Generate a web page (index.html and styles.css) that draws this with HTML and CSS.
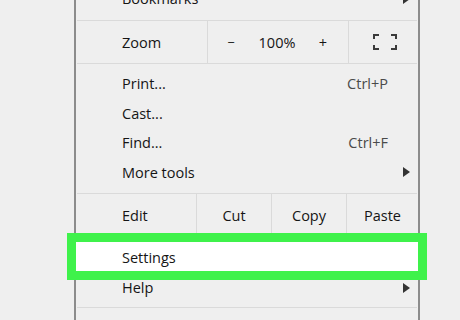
FILE: index.html
```html
<!DOCTYPE html>
<html lang="en">
<head>
  <meta charset="UTF-8">
  <meta name="viewport" content="width=device-width, initial-scale=1.0">
  <title>Browser Menu</title>
  <link rel="stylesheet" href="styles.css">
</head>
<body>
  <div class="menu">
    <div class="group first">
      <div class="item"><span>Bookmarks</span><span class="key"></span><span class="sub"></span></div>
    </div>
    <div class="sep"></div>

    <div class="row">
      <div class="row-label zoom-label">Zoom</div>
      <div class="zoom-ctrl">
        <span class="minus">&minus;</span>
        <span>100%</span>
        <span>+</span>
      </div>
      <div class="cell full">
        <svg width="24" height="16" viewBox="0 0 24 16">
          <path d="M1 5V1h5M18 1h5v4M1 11v4h5M18 15h5v-4" stroke="#3a3a3a" stroke-width="2" fill="none"/>
        </svg>
      </div>
    </div>
    <div class="sep"></div>

    <div class="group">
      <div class="item"><span>Print...</span><span class="key">Ctrl+P</span><span></span></div>
      <div class="item"><span>Cast...</span><span class="key"></span><span></span></div>
      <div class="item"><span>Find...</span><span class="key">Ctrl+F</span><span></span></div>
      <div class="item"><span>More tools</span><span class="key"></span><span class="sub"></span></div>
    </div>
    <div class="sep"></div>

    <div class="row">
      <div class="row-label edit-label">Edit</div>
      <div class="cell edit-cell">Cut</div>
      <div class="cell edit-cell">Copy</div>
      <div class="cell paste">Paste</div>
    </div>
    <div class="sep"></div>

    <div class="group last">
      <div class="item settings"><span>Settings</span><span class="key"></span><span></span></div>
      <div class="item help"><span>Help</span><span class="key"></span><span class="sub"></span></div>
    </div>
    <div class="sep"></div>

    <div class="group tail"></div>
  </div>
</body>
</html>
```

FILE: styles.css
```css
body {
  margin: 0;
  height: 320px;
  overflow: hidden;
  background-color: #efefef;
  font-family: "Open Sans", "Noto Sans", sans-serif;
  font-size: 14.5px;
  color: #151515;
}

.menu {
  margin: -21px 0 0 74px;
  width: 342px;
  border-left: 2px solid #8c8c8c;
  border-right: 2px solid #8c8c8c;
  background-color: #efefef;
}

.group {
  padding: 5px 0 6px;
}

.group.first {
  padding-bottom: 6.5px;
}

.group.last {
  padding-bottom: 4.5px;
}

.group.tail {
  height: 40px;
}

.item {
  display: grid;
  grid-template-columns: 1fr auto 7px;
  column-gap: 15px;
  align-items: center;
  height: 29.5px;
  line-height: 29.5px;
  padding: 0 8px 0 46px;
  white-space: nowrap;
}

.key {
  color: #4a4a4a;
}

.sub {
  width: 0;
  height: 0;
  border-left: 7px solid #333;
  border-top: 5px solid transparent;
  border-bottom: 5px solid transparent;
}

.settings {
  height: 29px;
  line-height: 27px;
  padding-top: 2px;
  box-sizing: border-box;
  background-color: #fff;
  outline: 9px solid #3ff24b;
}

.help {
  margin-top: 2px;
}

.sep {
  height: 1px;
  margin: 0 1px;
  background-color: #dadada;
}

.row {
  display: flex;
  height: 42px;
}

.row-label {
  box-sizing: border-box;
  padding-left: 46px;
  display: flex;
  align-items: center;
}

.zoom-label {
  width: 131px;
}

.edit-label {
  width: 120px;
}

.zoom-ctrl {
  box-sizing: border-box;
  width: 141px;
  border-left: 1px solid #dadada;
  display: grid;
  grid-template-columns: repeat(3, 46px);
  align-items: center;
  justify-items: center;
}

.minus {
  font-size: 13px;
}

.cell {
  box-sizing: border-box;
  border-left: 1px solid #dadada;
  display: flex;
  align-items: center;
  justify-content: center;
}

.edit-cell {
  width: 75px;
}

.paste,
.full {
  flex: 1;
}

.full {
  padding-left: 2px;
}
```
